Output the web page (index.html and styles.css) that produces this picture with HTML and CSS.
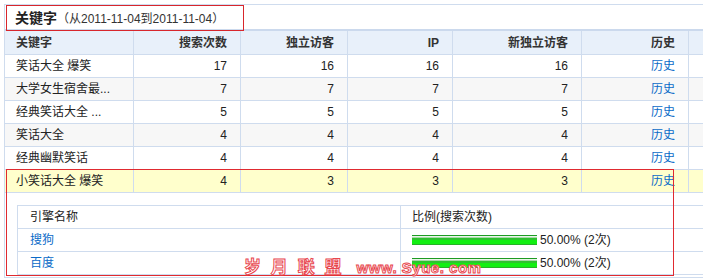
FILE: index.html
```html
<!DOCTYPE html>
<html lang="zh-CN">
<head>
<meta charset="utf-8">
<title>关键字</title>
<link rel="stylesheet" href="styles.css">
</head>
<body>
<div class="page">
  <table class="grid">
    <colgroup>
      <col class="c-kw"><col class="c-n"><col class="c-n"><col class="c-ip"><col class="c-kw"><col class="c-n"><col class="c-rest">
    </colgroup>
    <thead>
      <tr class="title-row">
        <td colspan="7"><div class="title"><b>关键字</b><span>（从2011-11-04到2011-11-04）</span></div></td>
      </tr>
      <tr class="head">
        <th class="left">关键字</th><th>搜索次数</th><th>独立访客</th><th>IP</th><th>新独立访客</th><th>历史</th><th class="blank"></th>
      </tr>
    </thead>
    <tbody>
      <tr><td class="left">笑话大全 爆笑</td><td>17</td><td>16</td><td>16</td><td>16</td><td><a href="#">历史</a></td><td class="blank"></td></tr>
      <tr class="alt"><td class="left">大学女生宿舍最...</td><td>7</td><td>7</td><td>7</td><td>7</td><td><a href="#">历史</a></td><td class="blank"></td></tr>
      <tr><td class="left">经典笑话大全 ...</td><td>5</td><td>5</td><td>5</td><td>5</td><td><a href="#">历史</a></td><td class="blank"></td></tr>
      <tr class="alt"><td class="left">笑话大全</td><td>4</td><td>4</td><td>4</td><td>4</td><td><a href="#">历史</a></td><td class="blank"></td></tr>
      <tr><td class="left">经典幽默笑话</td><td>4</td><td>4</td><td>4</td><td>4</td><td><a href="#">历史</a></td><td class="blank"></td></tr>
      <tr class="sel"><td class="left">小笑话大全 爆笑</td><td>4</td><td>3</td><td>3</td><td>3</td><td><a href="#">历史</a></td><td class="blank"></td></tr>
      <tr class="detail">
        <td colspan="7">
          <table class="engines">
            <colgroup><col class="e-name"><col class="e-ratio"></colgroup>
            <tr class="ehead"><td>引擎名称</td><td>比例(搜索次数)</td></tr>
            <tr><td><a href="#">搜狗</a></td><td><span class="bar" style="width:125px"></span><span class="pct">50.00% (2次)</span></td></tr>
            <tr><td><a href="#">百度</a></td><td><span class="bar" style="width:125px"></span><span class="pct">50.00% (2次)</span></td></tr>
          </table>
        </td>
      </tr>
    </tbody>
  </table>
  <div class="sel-outline"></div>
  <div class="watermark"><span class="wm-cn">岁 月 联 盟</span><span class="wm-en">www. Syue. com</span></div>
</div>
</body>
</html>
```

FILE: styles.css
```css
html, body {
  margin: 0;
  padding: 0;
  overflow: hidden;
  background: #fff;
}
body {
  font-family: "Liberation Sans", "Noto Sans CJK SC", sans-serif;
  font-size: 12px;
  color: #222;
}
.page {
  position: relative;
  padding: 4px 0 0 4px;
}
.grid {
  border-collapse: separate;
  border-spacing: 0;
  table-layout: fixed;
  width: 745px;
  border-left: 1px solid #cfdcee;
  border-top: 1px solid #cfdcee;
}
.c-kw { width: 129px; }
.c-n { width: 107px; }
.c-ip { width: 105px; }
.c-rest { width: 60px; }
.grid > thead > tr > th,
.grid > thead > tr > td,
.grid > tbody > tr > td {
  box-sizing: border-box;
  padding: 0 13px 0 11px;
  border-right: 1px solid #cfdcee;
  border-bottom: 1px solid #cfdcee;
  text-align: right;
  height: 23px;
  line-height: 22px;
  white-space: nowrap;
  vertical-align: middle;
}
.grid > thead > tr > .left,
.grid > tbody > tr > .left { text-align: left; }
.grid > thead > tr > .blank,
.grid > tbody > tr > .blank { border-right: none; }
.grid > thead > tr.title-row > td {
  height: 26px;
  padding: 0 0 0 1px;
  border-right: none;
  border-bottom: 2px solid #cbd9ed;
  text-align: left;
  vertical-align: top;
}
.title {
  box-sizing: border-box;
  width: 238px;
  height: 26px;
  margin-bottom: -2px;
  border: 1px solid #d8262c;
  padding-left: 8px;
  line-height: 24px;
  position: relative;
}
.title b {
  font-size: 14px;
  color: #222;
}
.title span {
  font-size: 12px;
  color: #333;
}
.grid > thead > tr.head > th {
  height: 24px;
  background: #e8f0fa;
  font-weight: bold;
  color: #333;
}
.grid > tbody > tr.alt > td { background: #f7f7f7; }
.grid > tbody > tr.sel > td { background: #ffffcc; }
a {
  color: #0a6bc8;
  text-decoration: none;
}
.grid > tbody > tr.detail > td {
  height: auto;
  padding: 12px 0 2px 12px;
  border-right: none;
  text-align: left;
  vertical-align: top;
}
.engines {
  border-collapse: separate;
  border-spacing: 0;
  table-layout: fixed;
  width: 732px;
  border-left: 1px solid #cfdcee;
  border-top: 1px solid #cfdcee;
}
.e-name { width: 383px; }
.engines td {
  box-sizing: border-box;
  height: 23px;
  line-height: 22px;
  padding: 0 0 0 12px;
  border-bottom: 1px solid #cfdcee;
  text-align: left;
  white-space: nowrap;
  vertical-align: middle;
}
.engines td:first-child { border-right: 1px solid #cfdcee; }
.engines td + td { padding-left: 11px; }
.ehead td { color: #222; }
.bar {
  display: inline-block;
  height: 10px;
  vertical-align: -1px;
  margin-right: 3px;
  background: linear-gradient(to bottom,
    #1d9b23 0, #1d9b23 1px,
    #eaf6ea 1px, #eaf6ea 2px,
    #a8d8a8 2px, #a8d8a8 3px,
    #2fc12f 3px, #2fc12f 5px,
    #12ef12 5px, #12ef12 9px,
    #27b027 9px, #27b027 10px);
}
.pct { color: #222; }
.sel-outline {
  position: absolute;
  left: 6px;
  top: 169px;
  width: 668px;
  height: 107px;
  box-sizing: border-box;
  border: 1px solid #e02a30;
  pointer-events: none;
}
.watermark {
  position: absolute;
  left: 244px;
  top: 256px;
  white-space: nowrap;
  color: #fff;
  font-weight: bold;
  -webkit-text-stroke: 1px #e8474f;
  pointer-events: none;
}
.wm-cn {
  font-family: "Noto Sans CJK SC", sans-serif;
  font-size: 17px;
  line-height: 20px;
  letter-spacing: 3px;
}
.wm-en {
  margin-left: 12px;
  font-family: "Liberation Sans", sans-serif;
  font-size: 15px;
  line-height: 20px;
  letter-spacing: 0.5px;
}
```
